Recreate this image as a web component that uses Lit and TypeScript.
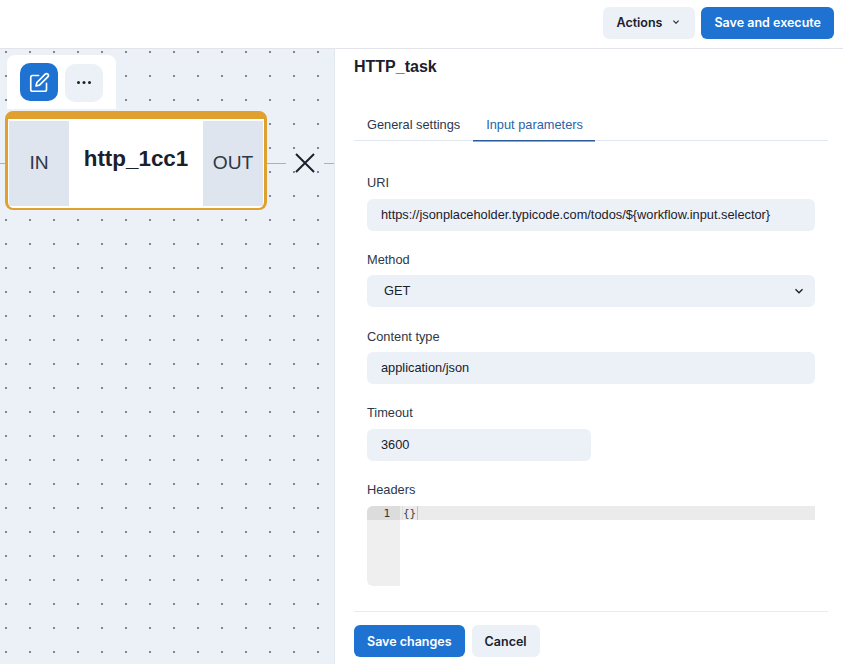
import { LitElement, html, css, svg } from 'lit';
import { customElement } from 'lit/decorators.js';

const chevron = svg`<svg class="chev" viewBox="0 0 24 24" width="16" height="16"><path fill="currentColor" d="M16.59 8.59 12 13.17 7.41 8.59 6 10l6 6 6-6z"/></svg>`;

@customElement('app-root')
export class AppRoot extends LitElement {
  static styles = css`
    :host {
      display: block;
      width: 843px;
      height: 664px;
      overflow: hidden;
      color: #1a202c;
      font-family: 'Liberation Sans', Arial, sans-serif;
      background: #fff;
    }
    button {
      font-family: Inter, sans-serif;
      font-size: 12.5px;
      font-weight: 600;
      border: 0;
      border-radius: 6px;
      height: 32px;
      padding: 0 13px;
      display: inline-flex;
      align-items: center;
      background: #ecf1f8;
      color: #1a202c;
    }
    button.primary {
      background: #1e73d2;
      color: #fff;
    }
    .topbar {
      height: 48px;
      border-bottom: 1px solid #e2e4e9;
      display: flex;
      justify-content: flex-end;
      align-items: center;
      gap: 6px;
      padding-right: 9px;
    }
    .topbar button {
      margin-top: -2px;
      padding-bottom: 2px;
    }
    .chev {
      margin-left: 8px;
      width: 12px;
      height: 12px;
    }
    .main {
      display: flex;
      height: 615px;
    }
    .canvas {
      position: relative;
      width: 334px;
      flex: none;
      border-right: 1px solid #e2e8f0;
      background-color: #ecf1f8;
      background-image: radial-gradient(circle, #7d8694 0.9px, transparent 1.3px);
      background-size: 24px 24px;
      background-position: -6px -9px;
      overflow: hidden;
    }
    .edge {
      position: absolute;
      top: 114px;
      height: 1px;
      background: #a9b1bc;
    }
    .toolbar {
      position: absolute;
      left: 7px;
      top: 6px;
      width: 109px;
      height: 54px;
      background: #fff;
      border-radius: 8px 8px 0 0;
    }
    .tool {
      position: absolute;
      width: 38px;
      height: 38px;
      padding: 0;
      justify-content: center;
      border-radius: 10px;
    }
    .tool.edit {
      left: 13px;
      top: 8px;
    }
    .tool.more {
      left: 58px;
      top: 9px;
    }
    .node {
      position: absolute;
      left: 5px;
      top: 62px;
      width: 262px;
      height: 99px;
      box-sizing: border-box;
      border: solid #e0a030;
      border-width: 8px 3px 2px;
      border-radius: 8px;
      background: #fff;
      padding: 2px 1px;
      display: flex;
    }
    .port {
      width: 60px;
      background: #dfe5ee;
      display: flex;
      align-items: center;
      justify-content: center;
      font-size: 19.2px;
      color: #2d3748;
      padding-bottom: 2px;
      box-sizing: border-box;
    }
    .label {
      flex: 1;
      text-align: center;
      font-size: 22.4px;
      font-weight: 700;
      padding-top: 23px;
      line-height: 30px;
    }
    .close {
      position: absolute;
      left: 294px;
      top: 103px;
    }
    .panel {
      flex: 1;
      padding: 0 15px 0 19px;
      display: flex;
      flex-direction: column;
    }
    h2 {
      margin: 8px 0 0;
      font-size: 16px;
      line-height: 20px;
      font-weight: 700;
    }
    .tabs {
      display: flex;
      margin-top: 31px;
      height: 32px;
      border-bottom: 1px solid #e2e8f0;
      font-size: 12.8px;
    }
    .tab {
      padding: 0 13px;
      line-height: 33px;
      color: #2d3748;
      white-space: nowrap;
    }
    .tab.active {
      color: #2b62a8;
      width: 122px;
      box-sizing: border-box;
      height: 33px;
      padding-right: 0;
      border-bottom: 1px solid #2b5c9c;
      box-shadow: 0 1px 0 #8ba9cf;
    }
    .form {
      padding: 32.6px 13px 0;
      height: 471px;
      box-sizing: border-box;
      border-bottom: 1px solid #e9ebef;
      margin-bottom: 13px;
    }
    .field {
      margin-bottom: 20px;
      height: 56.8px;
    }
    .field label {
      display: block;
      font-size: 12.8px;
      line-height: 17px;
      padding-top: 0.4px;
      height: 16.6px;
      color: #2d3748;
      margin-bottom: 8px;
    }
    .input {
      height: 32px;
      background: #ecf1f8;
      border-radius: 6px;
      padding: 0 14px;
      font-size: 12.8px;
      line-height: 32px;
      color: #1a202c;
      display: flex;
      align-items: center;
      justify-content: space-between;
    }
    .input.short {
      width: 224px;
      box-sizing: border-box;
    }
    .input.select {
      padding: 0 8px 0 17px;
    }
    .input.select svg {
      width: 16px;
      height: 16px;
      margin: 0;
    }
    .editor {
      height: 80px;
      display: flex;
      font-family: 'DejaVu Sans Mono', monospace;
      font-size: 11px;
      line-height: 14px;
    }
    .gutter {
      width: 33px;
      flex: none;
      background: #efefef;
      border-radius: 6px 0 0 6px;
    }
    .gutter div {
      height: 14px;
      padding-top: 1px;
      background: #dcdcdc;
      border-radius: 6px 0 0 0;
      text-align: right;
      padding-right: 10px;
      box-sizing: border-box;
      color: #333;
    }
    .code {
      flex: 1;
      height: 14px;
      background: #ebebeb;
      padding-left: 2px;
      color: #444;
    }
    .code span {
      display: inline-block;
      height: 14px;
      padding: 1px 1px 0 0;
      box-sizing: border-box;
      border-right: 1px solid #c4c4c4;
      border-left: 1px solid #dedede;
    }
    .footer {
      display: flex;
      gap: 7px;
    }
  `;

  render() {
    return html`
      <div class="topbar">
        <button>Actions ${chevron}</button>
        <button class="primary">Save and execute</button>
      </div>
      <div class="main">
        <div class="canvas">
          <div class="edge" style="left:0;width:5px"></div>
          <div class="edge" style="left:267px;width:19px"></div>
          <div class="edge" style="left:324px;width:10px"></div>
          <div class="toolbar">
            <button class="tool primary edit">
              <svg viewBox="0 0 24 24" width="21" height="21" fill="none" stroke="#fff" stroke-width="1.9" stroke-linecap="round" stroke-linejoin="round">
                <path d="M11 4H4a2 2 0 0 0-2 2v14a2 2 0 0 0 2 2h14a2 2 0 0 0 2-2v-7" />
                <path d="M18.5 2.5a2.12 2.12 0 0 1 3 3L12 15l-4 1 1-4 9.5-9.5z" />
              </svg>
            </button>
            <button class="tool more">
              <svg viewBox="0 0 16 16" width="16" height="16" fill="#1a202c">
                <circle cx="2.5" cy="7.5" r="1.5" /><circle cx="8" cy="7.5" r="1.5" /><circle cx="13.5" cy="7.5" r="1.5" />
              </svg>
            </button>
          </div>
          <div class="node">
            <div class="port">IN</div>
            <div class="label">http_1cc1</div>
            <div class="port">OUT</div>
          </div>
          <svg class="close" viewBox="0 0 22 22" width="22" height="22" stroke="#1a202c" stroke-width="2" fill="none">
            <path d="M2 2 20 20M20 2 2 20" />
          </svg>
        </div>
        <div class="panel">
          <h2>HTTP_task</h2>
          <div class="tabs">
            <div class="tab">General settings</div>
            <div class="tab active">Input parameters</div>
          </div>
          <div class="form">
            <div class="field">
              <label>URI</label>
              <div class="input">https://jsonplaceholder.typicode.com/todos/\${workflow.input.selector}</div>
            </div>
            <div class="field">
              <label>Method</label>
              <div class="input select">GET ${chevron}</div>
            </div>
            <div class="field">
              <label>Content type</label>
              <div class="input">application/json</div>
            </div>
            <div class="field">
              <label>Timeout</label>
              <div class="input short">3600</div>
            </div>
            <div class="field">
              <label>Headers</label>
              <div class="editor">
                <div class="gutter"><div>1</div></div>
                <div class="code"><span>{}</span></div>
              </div>
            </div>
          </div>
          <div class="footer">
            <button class="primary">Save changes</button>
            <button>Cancel</button>
          </div>
        </div>
      </div>
    `;
  }
}
